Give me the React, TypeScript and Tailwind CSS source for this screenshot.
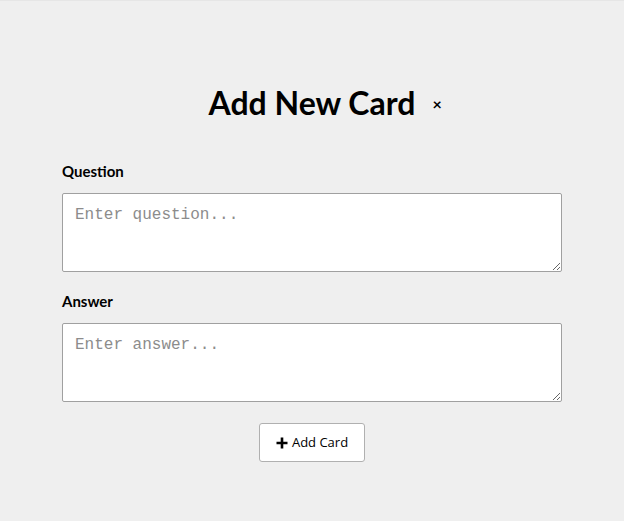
const textareaClassName =
	"mt-[12px] h-[79px] w-full resize-y rounded-[2px] border border-[#a0a0a0] bg-white px-[12px] pt-[12px] [font-family:'Courier_New','Nimbus_Mono_PS','Nimbus_Mono_L','FreeMono','Liberation_Mono',monospace] text-[16px] leading-[19px] text-black outline-none placeholder:text-[#8c8c8c]";

export default function App() {
	return (
		<div className="min-h-[521px] w-full border-t border-[#e6e6e6] bg-[#efefef] font-['Lato',sans-serif]">
			<div className="mx-auto flex w-[500px] flex-col pt-[82px]">
				<div className="flex justify-center">
					<div className="relative">
						<h1 className="text-[32px] font-bold leading-[40px] text-black">Add New Card</h1>
						<button className="absolute left-[calc(100%+17px)] top-[13px] text-[16px] font-bold leading-none text-black">
							×
						</button>
					</div>
				</div>
				<label className="mt-[38px] text-[15px] font-bold leading-[20px] text-black">Question</label>
				<textarea className={textareaClassName} placeholder="Enter question..." />
				<label className="mt-[19px] text-[15px] font-bold leading-[20px] text-black">Answer</label>
				<textarea className={textareaClassName} placeholder="Enter answer..." />
				<div className="mt-[21px] flex justify-center">
					<button className="flex h-[39px] w-[106px] items-center justify-center gap-[4px] rounded-[3px] border border-[#b0b0b0] bg-white font-['Open_Sans',sans-serif] text-[13px] text-black">
						<svg width="12" height="12" viewBox="0 0 12 12">
							<path d="M6 0.5v11M0.5 6h11" stroke="black" strokeWidth="2.6" />
						</svg>
						Add Card
					</button>
				</div>
			</div>
		</div>
	);
}
